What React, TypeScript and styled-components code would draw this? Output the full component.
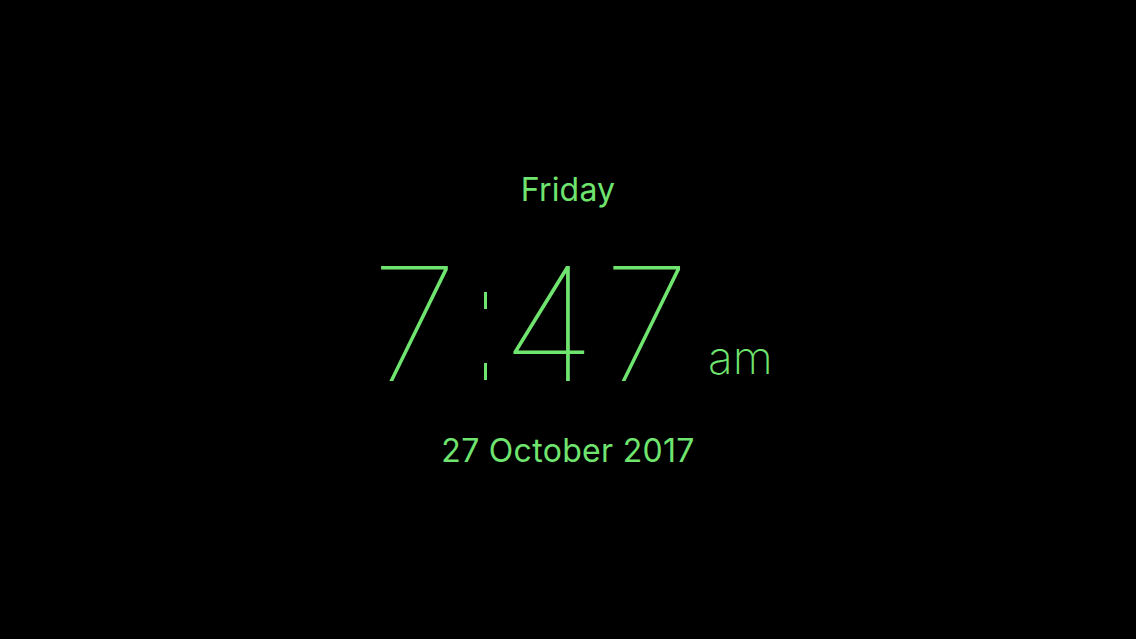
import styled, { createGlobalStyle } from "styled-components";

const GlobalStyle = createGlobalStyle`
  html, body {
    margin: 0;
    padding: 0;
    background: #000;
  }
`;

const green = "#6fe46f";

const Screen = styled.div`
  width: 1136px;
  height: 639px;
  background: #000;
  display: flex;
  flex-direction: column;
  align-items: center;
  font-family: "Inter", "Liberation Sans", sans-serif;
  color: ${green};
  overflow: hidden;
`;

const DayLabel = styled.div`
  margin-top: 170px;
  font-size: 32px;
  font-weight: 400;
  line-height: 40px;
  letter-spacing: 0.2px;
`;

const TimeRow = styled.div`
  margin-top: 44px;
  display: flex;
  align-items: flex-end;
  margin-left: 8px;
`;

const Digits = styled.span`
  font-size: 158px;
  font-weight: 100;
  line-height: 140px;
  letter-spacing: 8px;
`;

const Colon = styled.span`
  display: flex;
  flex-direction: column;
  justify-content: space-between;
  height: 88px;
  margin: 0 15px 14px 18px;
`;

const ColonBar = styled.span`
  display: block;
  width: 3px;
  height: 17px;
  background: ${green};
`;

const Suffix = styled.span`
  font-size: 46px;
  font-weight: 200;
  line-height: 46px;
  margin-left: 10px;
  margin-bottom: 14px;
`;

const DateLabel = styled.div`
  margin-top: 37px;
  font-size: 32px;
  font-weight: 400;
  line-height: 40px;
  letter-spacing: 0.3px;
`;

export default function App() {
  return (
    <Screen>
      <GlobalStyle />
      <DayLabel>Friday</DayLabel>
      <TimeRow>
        <Digits>7</Digits>
        <Colon>
          <ColonBar />
          <ColonBar />
        </Colon>
        <Digits>47</Digits>
        <Suffix>am</Suffix>
      </TimeRow>
      <DateLabel>27 October 2017</DateLabel>
    </Screen>
  );
}
